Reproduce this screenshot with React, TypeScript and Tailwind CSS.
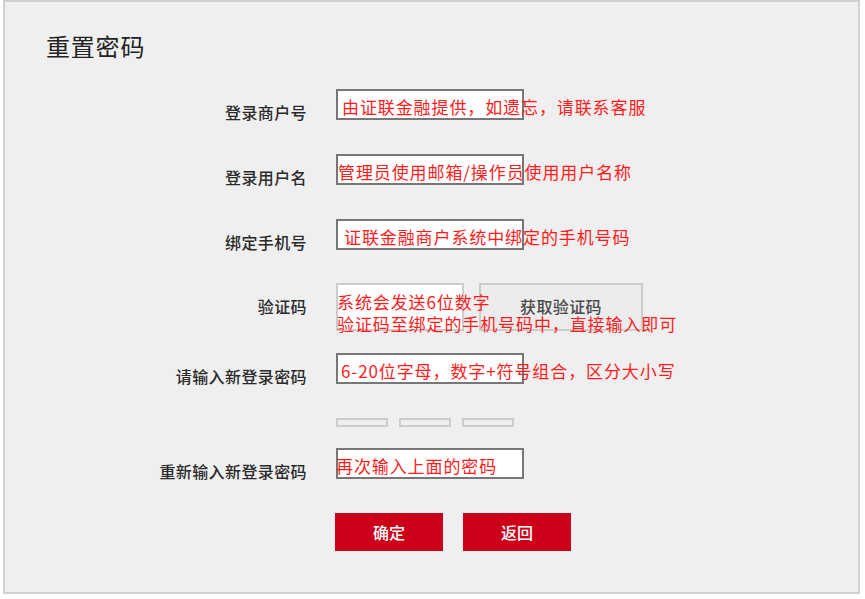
import React from 'react';

const font = { fontFamily: '"Noto Sans CJK SC", "Noto Sans", sans-serif' };

const Label: React.FC<{ text: string; className?: string }> = ({ text, className = '' }) => (
  <div className={`w-[302px] shrink-0 text-right text-[16px] leading-[16px] tracking-[0.4px] font-medium text-[#2a2a2a] ${className}`}>
    {text}
  </div>
);

const Field: React.FC<{ hint: string; pad: string }> = ({ hint, pad }) => (
  <div className="flex h-[31px] w-[188px] shrink-0 items-end border-2 border-[#777] bg-white">
    <span className={`relative whitespace-nowrap text-[17px] leading-[22px] tracking-[0.9px] text-[#ff1c1c] ${pad}`}>
      {hint}
    </span>
  </div>
);

const App: React.FC = () => {
  return (
    <div className="h-[599px] w-[865px] bg-white" style={font}>
      <div className="ml-[3px] h-[594px] w-[857px] border-2 border-[#d0d0d0] bg-[#efefef]">
        <h1 className="pl-[41px] pt-[32px] text-[24px] leading-[24px] tracking-[0.8px] font-normal text-[#222]">重置密码</h1>

        {/* 登录商户号 */}
        <div className="mt-[31px] flex items-end gap-[29px]">
          <Label text="登录商户号" />
          <Field hint="由证联金融提供，如遗忘，请联系客服" pad="pl-[4px]" />
        </div>

        {/* 登录用户名 */}
        <div className="mt-[34px] flex items-end gap-[29px]">
          <Label text="登录用户名" />
          <Field hint="管理员使用邮箱/操作员使用用户名称" pad="pl-0" />
        </div>

        {/* 绑定手机号 */}
        <div className="mt-[34px] flex items-end gap-[29px]">
          <Label text="绑定手机号" />
          <Field hint="证联金融商户系统中绑定的手机号码" pad="pl-[6px]" />
        </div>

        {/* 验证码 */}
        <div className="mt-[33px] flex items-start gap-[29px]">
          <Label text="验证码" className="mt-[15px]" />
          <div className="flex gap-[15px]">
            <div className="h-[48px] w-[128px] border-2 border-[#ccc] bg-white">
              <div className="relative z-10 ml-[-1px] pt-[6px] whitespace-nowrap text-[17px] leading-[22px] tracking-[0.9px] text-[#ff1c1c]">
                <div>系统会发送6位数字</div>
                <div>验证码至绑定的手机号码中，直接输入即可</div>
              </div>
            </div>
            <button className="h-[48px] w-[164px] border-2 border-[#ccc] bg-[#ececec] pb-[2px] text-[16px] leading-[16px] tracking-[0.4px] font-medium text-[#4a4a4a]">
              获取验证码
            </button>
          </div>
        </div>

        {/* 新密码 */}
        <div className="mt-[22px] flex items-end gap-[29px]">
          <Label text="请输入新登录密码" />
          <Field hint="6-20位字母，数字+符号组合，区分大小写" pad="pl-[3px]" />
        </div>

        {/* 强度 */}
        <div className="mt-[34px] flex gap-[11px] pl-[331px]">
          <div className="h-[9px] w-[52px] border-2 border-[#ccc]" />
          <div className="h-[9px] w-[52px] border-2 border-[#ccc]" />
          <div className="h-[9px] w-[52px] border-2 border-[#ccc]" />
        </div>

        {/* 确认密码 */}
        <div className="mt-[21px] flex items-end gap-[29px]">
          <Label text="重新输入新登录密码" />
          <Field hint="再次输入上面的密码" pad="ml-[-2px]" />
        </div>

        <div className="mt-[34px] flex gap-[20px] pl-[330px]">
          <button className="h-[38px] w-[108px] bg-[#cc0019] text-[16px] font-medium text-white">确定</button>
          <button className="h-[38px] w-[108px] bg-[#cc0019] text-[16px] font-medium text-white">返回</button>
        </div>
      </div>
    </div>
  );
};

export default App;
